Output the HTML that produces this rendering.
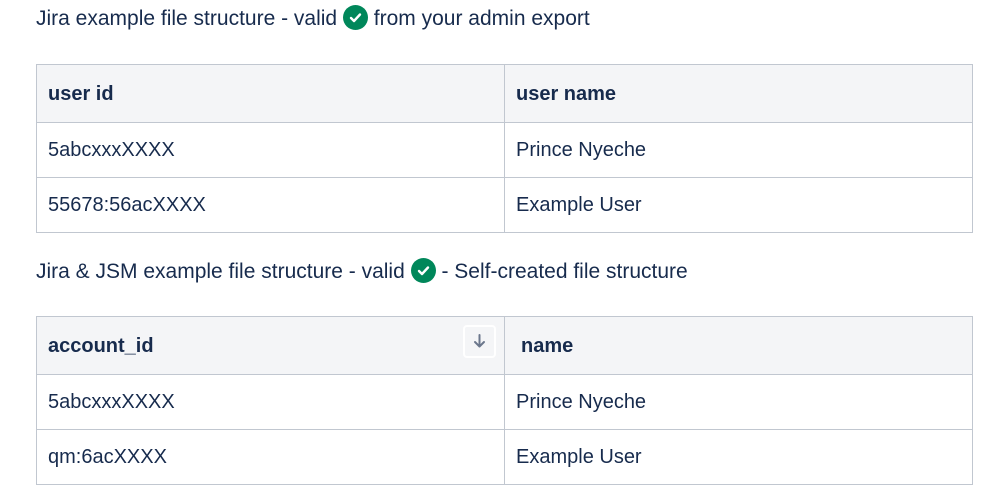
<!DOCTYPE html>
<html><head><style>
body{margin:0;background:#fff;font-family:"Liberation Sans",sans-serif;color:#172b4d;width:999px;height:503px;overflow:hidden;position:relative}
p{position:absolute;left:36px;margin:0;font-size:21px;line-height:24px;white-space:nowrap}
.ck{display:inline-block;width:25px;height:25px;border-radius:50%;background:#00875a;vertical-align:-5px;position:relative}
.ck svg{position:absolute;left:0;top:0}
table{position:absolute;left:36px;width:937px;border-collapse:collapse;font-size:20px}
td,th{border:1px solid #c1c7d0;padding:0 11px;text-align:left;height:54px}
th{background:#f4f5f7;height:55px;font-weight:bold;position:relative;padding-top:2px}
.sb{position:absolute;right:8px;top:8px;width:33px;height:33px;border:2px solid #fff;border-radius:4px;box-sizing:border-box;text-align:center}
</style></head><body>
<p style="top:5px">Jira example file structure - valid <span class="ck"><svg width="25" height="25"><path d="M8 13l3 3 6-6.5" stroke="#fff" stroke-width="2.4" fill="none" stroke-linecap="round" stroke-linejoin="round"/></svg></span> from your admin export</p>
<table style="top:64px"><tr><th style="width:445px">user id</th><th>user name</th></tr>
<tr><td>5abcxxxXXXX</td><td>Prince Nyeche</td></tr>
<tr><td>55678:56acXXXX</td><td>Example User</td></tr></table>
<p style="top:258px">Jira &amp; JSM example file structure - valid <span class="ck"><svg width="25" height="25"><path d="M8 13l3 3 6-6.5" stroke="#fff" stroke-width="2.4" fill="none" stroke-linecap="round" stroke-linejoin="round"/></svg></span> - Self-created file structure</p>
<table style="top:316px"><tr><th style="width:445px">account_id<span class="sb"><svg width="29" height="29"><path d="M14.5 8v11M10 15l4.5 4.5L19 15" stroke="#6b778c" stroke-width="2" fill="none" stroke-linecap="round" stroke-linejoin="round"/></svg></span></th><th style="padding-left:16px">name</th></tr>
<tr><td>5abcxxxXXXX</td><td>Prince Nyeche</td></tr>
<tr><td>qm:6acXXXX</td><td>Example User</td></tr></table>
</body></html>
